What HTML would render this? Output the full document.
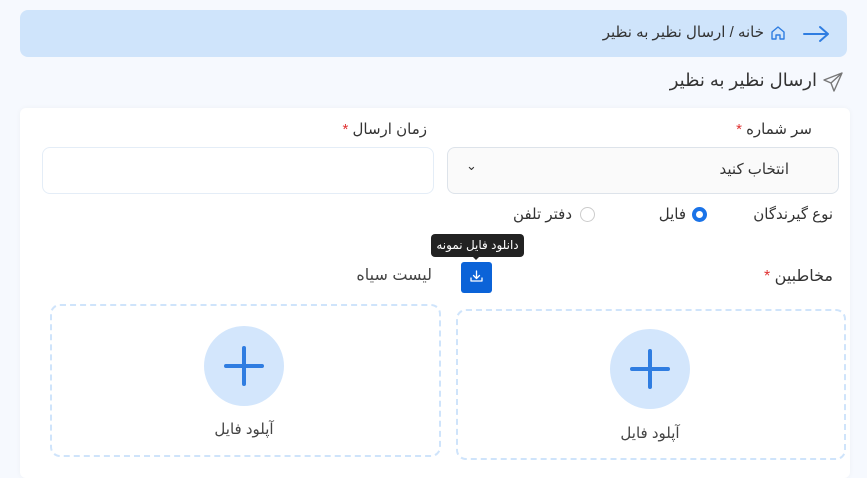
<!DOCTYPE html>
<html dir="rtl"><head><meta charset="utf-8"><style>
*{box-sizing:border-box;margin:0;padding:0}
body{width:867px;height:467px;overflow:hidden;background:#f6f9fe;font-family:"Liberation Sans","DejaVu Sans",sans-serif;color:#333;position:relative}
.a{position:absolute}
.bc{left:20px;top:10px;width:827px;height:47px;background:#cfe4fb;border-radius:8px}
.card{left:20px;top:108px;width:830px;height:370px;background:#fff;border-radius:6px;box-shadow:0 0 6px rgba(0,0,0,.04)}
.t{font-size:15px;white-space:nowrap}
.in{border:1px solid #dde3ea;border-radius:8px;background:#fff}
.up{border:2px dashed #cfe4fb;border-radius:10px}
.circ{width:80px;height:80px;border-radius:50%;background:#d3e6fc}
.red{color:#e03131}
</style></head><body>
<div class="a bc"></div>
<svg class="a" style="left:802px;top:25px" width="28" height="18" viewBox="0 0 28 18"><path d="M2 9H26M18 2L26 9L18 16" fill="none" stroke="#2f7de1" stroke-width="2" stroke-linecap="round" stroke-linejoin="round"/></svg>
<svg class="a" style="left:769px;top:24px" width="18" height="18" viewBox="0 0 18 18"><path d="M3 8L9 3L15 8V15H11V11H7V15H3Z" fill="none" stroke="#2f7de1" stroke-width="1.4" stroke-linejoin="round"/></svg>
<div class="a t" style="right:103px;top:23px;color:#333">خانه / ارسال نظیر به نظیر</div>
<svg class="a" style="left:822px;top:71px" width="22" height="22" viewBox="0 0 22 22"><path d="M20 2L2 9L9 12L12 20Z M20 2L9 12" fill="none" stroke="#777" stroke-width="1.4" stroke-linejoin="round"/></svg>
<div class="a" style="right:50px;top:70px;font-size:18px;color:#333">ارسال نظیر به نظیر</div>
<div class="a card"></div>
<div class="a t" style="right:55px;top:120px">سر شماره <span class="red">*</span></div>
<div class="a t" style="right:440px;top:120px">زمان ارسال <span class="red">*</span></div>
<div class="a in" style="left:447px;top:147px;width:392px;height:47px;background:#fafafa"></div>
<div class="a t" style="right:78px;top:160px">انتخاب کنید</div>
<div class="a" style="left:466px;top:158px;font-size:13px">&#8964;</div>
<div class="a in" style="left:42px;top:147px;width:392px;height:47px;border-color:#e4edf7"></div>
<div class="a t" style="right:34px;top:205px">نوع گیرندگان</div>
<div class="a" style="left:692px;top:207px;width:15px;height:15px;border-radius:50%;border:4px solid #1a73e8;background:#fff"></div>
<div class="a t" style="right:181px;top:205px">فایل</div>
<div class="a" style="left:580px;top:207px;width:15px;height:15px;border-radius:50%;border:1px solid #ccc"></div>
<div class="a t" style="right:295px;top:205px">دفتر تلفن</div>
<div class="a" style="left:431px;top:234px;width:93px;height:23px;background:#222;border-radius:4px;color:#fff;font-size:12px;text-align:center;line-height:22px">دانلود فایل نمونه</div>
<div class="a" style="left:472px;top:256px;width:0;height:0;border:4px solid transparent;border-top-color:#222"></div>
<div class="a" style="left:461px;top:262px;width:31px;height:31px;background:#0b63d8;border-radius:3px"></div>
<svg class="a" style="left:468px;top:268px" width="17" height="17" viewBox="0 0 17 17"><path d="M8.5 3V10M5.5 7.5L8.5 10.5L11.5 7.5M3 10V13H14V10" fill="none" stroke="#fff" stroke-width="1.3" stroke-linecap="round" stroke-linejoin="round"/></svg>
<div class="a t" style="right:34px;top:266px;font-size:16px">مخاطبین <span class="red">*</span></div>
<div class="a t" style="right:435px;top:265px;font-size:16px;color:#444">لیست سیاه</div>
<div class="a up" style="left:50px;top:304px;width:391px;height:153px"></div>
<div class="a up" style="left:456px;top:309px;width:390px;height:151px"></div>
<div class="a circ" style="left:204px;top:326px"></div>
<div class="a circ" style="left:610px;top:329px"></div>
<svg class="a" style="left:224px;top:346px" width="40" height="40"><path d="M20 2V38M2 20H38" stroke="#2f7de1" stroke-width="4" stroke-linecap="round"/></svg>
<svg class="a" style="left:630px;top:349px" width="40" height="40"><path d="M20 2V38M2 20H38" stroke="#2f7de1" stroke-width="4" stroke-linecap="round"/></svg>
<div class="a t" style="left:204px;top:420px;width:80px;text-align:center;color:#444">آپلود فایل</div>
<div class="a t" style="left:610px;top:424px;width:80px;text-align:center;color:#444">آپلود فایل</div>
</body></html>
